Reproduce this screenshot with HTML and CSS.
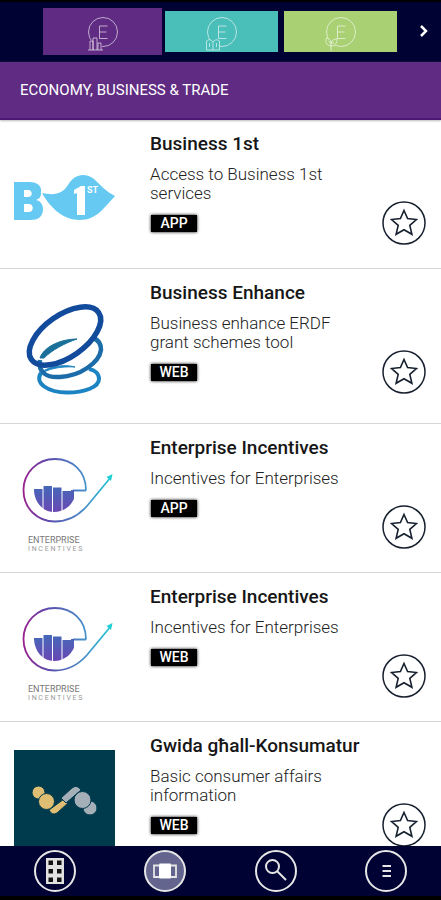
FILE: index.html
```html
<!DOCTYPE html>
<html lang="en">
<head>
<meta charset="utf-8">
<meta name="viewport" content="width=device-width, initial-scale=1">
<title>Economy, Business &amp; Trade</title>
<link rel="stylesheet" href="styles.css">
</head>
<body>
<svg class="defs" aria-hidden="true">
  <defs>
    <linearGradient id="swirl" gradientUnits="userSpaceOnUse" x1="8" y1="50" x2="101" y2="50">
      <stop offset="0" stop-color="#9a1f8c"/><stop offset=".3" stop-color="#5a4fae"/><stop offset=".65" stop-color="#4a8bc8"/><stop offset="1" stop-color="#1fd0d4"/>
    </linearGradient>
    <linearGradient id="bars" gradientUnits="userSpaceOnUse" x1="0" y1="34" x2="0" y2="60">
      <stop offset="0" stop-color="#4468b8"/><stop offset="1" stop-color="#6a48b4"/>
    </linearGradient>
    <clipPath id="bowl"><path d="M20 30H62V40C60 53 50 60 40 60C29 60 21 51 20 39Z"/></clipPath>
    <symbol id="star" viewBox="0 0 44 44">
      <circle cx="22" cy="22" r="21" fill="#fff" stroke="#17202e" stroke-width="1.5"/>
      <path d="M22 9.5L25.6 17.6L34.4 18.5L27.8 24.4L29.9 33.3L22 28.7L14.1 33.3L16.2 24.4L9.6 18.5L18.4 17.6Z" fill="none" stroke="#17202e" stroke-width="1.6"/>
    </symbol>
    <symbol id="letter-e" viewBox="0 0 34 36" overflow="visible">
      <circle cx="17" cy="18" r="14.500"/><path d="M21.500 12H13.500V24.500H21.500M13.500 18H20.500"/>
    </symbol>
    <symbol id="enterprise" viewBox="0 0 101 101">
      <path d="M72 38.500H59M72 38.500C72 19 58 7 41 7C23 7 9.500 21 9.500 38C9.500 56 23 69.500 41 69.500C55 69.500 65 63 73 54L97 25" fill="none" stroke="url(#swirl)" stroke-width="1.800"/>
      <path d="M98.500 22L97 29L92.500 25Z" fill="#1fd0d4"/>
      <g clip-path="url(#bowl)" fill="url(#bars)">
        <rect x="20" y="37" width="8.500" height="24"/><rect x="29.500" y="34" width="8.500" height="27"/><rect x="39" y="35.500" width="8.500" height="25"/><rect x="48.500" y="39" width="8.500" height="22"/><rect x="57" y="38" width="3" height="20"/>
      </g>
      <text x="14" y="91" class="logo-name">ENTERPRISE</text>
      <text x="14" y="99" class="logo-sub">I N C E N T I V E S</text>
    </symbol>
  </defs>
</svg>
<div class="app">
  <header class="tabs">
    <span></span>
    <button class="tab tab-economy active" aria-label="Economy">
      <svg viewBox="0 0 34 36"><use href="#letter-e"/><path class="tab-cover" d="M2 35V26H6V22H11V25H16V35Z"/><path d="M2 36H17M4 36V27H7V36M7 36V24H11V36M12 36V29H15V36"/></svg>
    </button>
    <button class="tab tab-education" aria-label="Education">
      <svg viewBox="0 0 34 36"><use href="#letter-e"/><path class="tab-cover" d="M1.500 27Q5 24 8 28Q11 24 14.500 27V36H1.500Z"/><path d="M1.500 27Q5 24 8 28Q11 24 14.500 27V36H1.500ZM8 28V36M4.500 29V33M11.500 29V33"/></svg>
    </button>
    <button class="tab tab-environment" aria-label="Environment">
      <svg viewBox="0 0 34 36"><use href="#letter-e"/><path class="tab-cover" d="M7 32C2 31 1 28 2.500 24C6 25 7 27 7 29C8 26 10 25 13 25C13 29 11 32 7 32Z"/><path d="M7 32C2 31 1 28 2.500 24C6 25 7 27 7 29C8 26 10 25 13 25C13 29 11 32 7 32ZM7 37V30M4.500 27L7 30L10 28"/></svg>
    </button>
    <button class="next" aria-label="Next categories"><svg viewBox="0 0 8 12"><path d="M1 1L6 6L1 11"/></svg></button>
  </header>
  <h1 class="heading">ECONOMY, BUSINESS &amp; TRADE</h1>
  <main class="list">
    <article class="item">
      <svg class="logo" viewBox="0 0 101 101" role="img" aria-label="Business 1st">
        <g fill="#65c9f2">
          <path fill-rule="evenodd" d="M0 34H15C24 34 28 38 27 45C27 49 25 51 22 52C27 53 29 57 29 61C29 69 24 72 16 72H0ZM10 42V49H14C19 49 19 42 14 42ZM10 56V64H15C20 64 20 56 15 56Z"/>
          <path d="M28 45C42 48 49 45 54 37C60 26 71 24 80 31C87 38 93 44 101 48C89 61 82 72 66 72C50 72 37 61 28 45Z"/>
        </g>
        <path d="M60 42L67 38H71V67H63V45L60 46Z" fill="#fff"/>
        <text x="73" y="45" class="logo-st">ST</text>
      </svg>
      <div class="info"><h2>Business 1st</h2><p>Access to Business 1st services</p><span class="badge">APP</span></div>
      <button class="fav" aria-label="Add Business 1st to favourites"><svg><use href="#star"/></svg></button>
    </article>
    <article class="item">
      <svg class="logo tall" viewBox="0 0 101 107" role="img" aria-label="Business Enhance">
        <path d="M61 70C47 69 33 72 27 77C28 72 46 66 61 70Z" fill="#1d84c3" stroke="#1d84c3"/>
        <g fill="none">
          <path d="M27 76C20 86 34 95.500 53 95.500C71 95.500 85 90 85 82C85 77 81 73 75 72" stroke="#1d84c3" stroke-width="4"/>
          <path d="M26 63C24 75 32 81 46 80C66 79 85 66 87 53C87 47 85 43 79 41" stroke="#1b6ca8" stroke-width="4.500"/>
          <path d="M26 61C29 51 45 42 63 42C51 46 38 53 30 61Z" fill="#1b7099" stroke="#1b7099"/>
          <ellipse cx="51" cy="39" rx="41" ry="21" transform="rotate(-35 51 39)" stroke="#124a9c" stroke-width="5.500"/>
        </g>
      </svg>
      <div class="info"><h2>Business Enhance</h2><p>Business enhance ERDF grant schemes tool</p><span class="badge">WEB</span></div>
      <button class="fav" aria-label="Add Business Enhance to favourites"><svg><use href="#star"/></svg></button>
    </article>
    <article class="item">
      <svg class="logo" role="img" aria-label="Enterprise Incentives"><use href="#enterprise"/></svg>
      <div class="info"><h2>Enterprise Incentives</h2><p>Incentives for Enterprises</p><span class="badge">APP</span></div>
      <button class="fav" aria-label="Add Enterprise Incentives app to favourites"><svg><use href="#star"/></svg></button>
    </article>
    <article class="item">
      <svg class="logo" role="img" aria-label="Enterprise Incentives"><use href="#enterprise"/></svg>
      <div class="info"><h2>Enterprise Incentives</h2><p>Incentives for Enterprises</p><span class="badge">WEB</span></div>
      <button class="fav" aria-label="Add Enterprise Incentives web to favourites"><svg><use href="#star"/></svg></button>
    </article>
    <article class="item">
      <svg class="logo" viewBox="0 0 101 101" role="img" aria-label="Gwida għall-Konsumatur">
        <rect width="101" height="101" fill="#003b4d"/>
        <g fill="#dfbd72" stroke="#003b4d"><path d="M35 60L50 49L54 53L43 63Q38 66 35 60Z"/><circle cx="24.500" cy="42.500" r="6.500"/><circle cx="32.500" cy="51.500" r="8"/></g>
        <g fill="#a4afb8" stroke="#003b4d"><path d="M47 48L58 38Q63 34 67 40L52 53Z"/><circle cx="76" cy="58" r="7"/><circle cx="68.500" cy="50" r="8.500"/></g>
      </svg>
      <div class="info"><h2>Gwida għall-Konsumatur</h2><p>Basic consumer affairs information</p><span class="badge">WEB</span></div>
      <button class="fav" aria-label="Add Gwida għall-Konsumatur to favourites"><svg><use href="#star"/></svg></button>
    </article>
  </main>
  <nav class="bottom">
    <button aria-label="Grid view"><svg viewBox="0 0 44 44"><circle cx="22" cy="22" r="20"/><rect x="13" y="9" width="18" height="26" fill="#e0e0e0" stroke="none"/><g fill="#111" stroke="none"><rect x="15.500" y="11.500" width="4.500" height="4.500"/><rect x="24" y="11.500" width="4.500" height="4.500"/><rect x="15.500" y="20" width="4.500" height="4.500"/><rect x="24" y="20" width="4.500" height="4.500"/><rect x="15.500" y="28.500" width="4.500" height="4.500"/><rect x="24" y="28.500" width="4.500" height="4.500"/></g></svg></button>
    <button aria-label="Carousel view" aria-current="page"><svg viewBox="0 0 44 44"><circle cx="22" cy="22" r="20" fill="#64658f"/><path d="M16 16.500H11V28H16M28 16.500H33V28H28" stroke-width="1.800"/><rect x="16" y="14.500" width="12" height="15" rx="1" fill="#fff" stroke="none"/></svg></button>
    <button aria-label="Search"><svg viewBox="0 0 44 44"><circle cx="22" cy="22" r="20"/><circle cx="18.500" cy="17.500" r="6.500"/><path d="M23 22L32 31"/></svg></button>
    <button aria-label="Menu"><svg viewBox="0 0 44 44"><circle cx="22" cy="22" r="20"/><path d="M18.500 17H27M18.500 22H27M18.500 27H27"/></svg></button>
  </nav>
</div>
</body>
</html>
```

FILE: styles.css
```css
* { box-sizing: border-box; }

body {
  margin: 0;
  background: #fff;
  color: #161616;
  font-family: Roboto, "Liberation Sans", sans-serif;
}

button {
  padding: 0;
  border: 0;
  background: none;
  cursor: pointer;
}

svg { display: block; }

.defs {
  position: absolute;
  width: 0;
  height: 0;
}

.app {
  display: flex;
  flex-direction: column;
  height: 100vh;
}

.tabs {
  display: grid;
  grid-template-columns: 43px 1fr 1fr 1fr 41px;
  flex: none;
  height: 62px;
  padding: 6px 0 4px;
  border-top: 2px solid #000;
  background: #000233;
}

.tab {
  display: grid;
  place-items: center;
  margin: 3px 3px 6px;
}

.tab.active {
  margin: 0 0 3px;
}

.tab svg {
  width: 34px;
  height: 36px;
  overflow: visible;
  fill: none;
  stroke: rgb(255 255 255 / 60%);
}

.tab-economy { background: #602b82; }
.tab-education { background: #4abeb8; }
.tab-environment { background: #a9d073; }

.tab .tab-cover { stroke: none; }
.tab-economy .tab-cover { fill: #602b82; }
.tab-education .tab-cover { fill: #4abeb8; }
.tab-environment .tab-cover { fill: #a9d073; }

.next {
  display: grid;
  place-items: center;
  padding: 0 0 4px 6px;
}

.next svg {
  width: 8px;
  height: 12px;
  fill: none;
  stroke: #fff;
  stroke-width: 2.5;
}

.heading {
  flex: none;
  margin: 0;
  padding: 0 20px;
  border-bottom: 2px solid #4b1773;
  background: #602b82;
  box-shadow: 0 1px 2px #bbb;
  color: #fff;
  font-size: 15px;
  font-weight: 400;
  line-height: 56px;
}

.list {
  flex: 1;
  min-height: 0;
  overflow-y: auto;
  scrollbar-width: none;
}

.item {
  display: flex;
  align-items: flex-start;
  padding: 0 15px 0 14px;
  border-bottom: 1px solid #d6d6d6;
}

.logo {
  flex: none;
  width: 101px;
  height: 101px;
  margin: 28px 0 19px;
}

.logo.tall { height: 107px; }

.logo-name {
  fill: #777;
  font-size: 9px;
}

.logo-sub {
  fill: #999;
  font-size: 7px;
}

.logo-st {
  fill: #fff;
  font-size: 9px;
  font-weight: 700;
}

.info {
  flex: 1;
  padding: 13px 20px 0 35px;
}

.info h2 {
  margin: 0;
  font-size: 19px;
  font-weight: 500;
  line-height: 22px;
  white-space: nowrap;
}

.info p {
  margin: 10px 0 12px;
  color: #222;
  font-size: 17px;
  font-weight: 300;
  line-height: 19px;
}

.badge {
  display: block;
  width: 46px;
  margin-left: 1px;
  background: #000;
  box-shadow: 0 0 3px #000;
  color: #fff;
  font-size: 14px;
  font-weight: 500;
  line-height: 17px;
  text-align: center;
}

.fav {
  flex: none;
  margin-top: 81px;
}

.fav svg {
  width: 44px;
  height: 44px;
}

.bottom {
  display: grid;
  grid-template-columns: repeat(4, 1fr);
  flex: none;
  height: 54px;
  border-bottom: 4px solid #000;
  background: #000233;
}

.bottom button {
  display: grid;
  place-items: center;
}

.bottom svg {
  width: 44px;
  height: 44px;
  fill: none;
  stroke: #e6e6e6;
  stroke-width: 2;
}
```
